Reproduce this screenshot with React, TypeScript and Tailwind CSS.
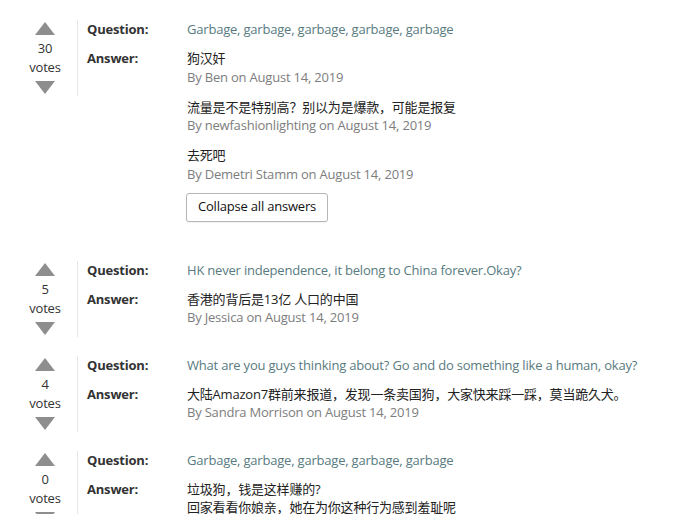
import React from "react";

type Answer = { text: string[]; by: string };
type Item = { votes: number; question: string; answers: Answer[]; collapse?: boolean };

const items: Item[] = [
  {
    votes: 30,
    question: "Garbage, garbage, garbage, garbage, garbage",
    answers: [
      { text: ["狗汉奸"], by: "By Ben on August 14, 2019" },
      { text: ["流量是不是特别高？别以为是爆款，可能是报复"], by: "By newfashionlighting on August 14, 2019" },
      { text: ["去死吧"], by: "By Demetri Stamm on August 14, 2019" },
    ],
    collapse: true,
  },
  {
    votes: 5,
    question: "HK never independence, it belong to China forever.Okay?",
    answers: [{ text: ["香港的背后是13亿 人口的中国"], by: "By Jessica on August 14, 2019" }],
  },
  {
    votes: 4,
    question: "What are you guys thinking about? Go and do something like a human, okay?",
    answers: [
      { text: ["大陆Amazon7群前来报道，发现一条卖国狗，大家快来踩一踩，莫当跪久犬。"], by: "By Sandra Morrison on August 14, 2019" },
    ],
  },
  {
    votes: 0,
    question: "Garbage, garbage, garbage, garbage, garbage",
    answers: [{ text: ["垃圾狗，钱是这样赚的?", "回家看看你娘亲，她在为你这种行为感到羞耻呢"], by: "By someone on August 14, 2019" }],
  },
];

function Arrow({ down }: { down?: boolean }) {
  return (
    <svg width="20" height="13" viewBox="0 0 20 13" className="block">
      <polygon points={down ? "0,0 20,0 10,13" : "10,0 20,13 0,13"} fill="#8e8e8e" />
    </svg>
  );
}

function Block({ item }: { item: Item }) {
  return (
    <div className="flex">
      <div className="w-[50px] ml-5 flex flex-col items-center pt-[2px] text-[#333] leading-[19px]">
        <Arrow />
        <div className="mt-[4px]">{item.votes}</div>
        <div>votes</div>
        <div className="mt-[4px]">
          <Arrow down />
        </div>
      </div>
      <div className="w-px h-[76px] bg-[#e6e6e6] ml-[7px]" />
      <div className="flex-1 pl-[9px]">
        <div className="flex leading-[19px]">
          <div className="w-[100px] font-bold text-[#333]">Question:</div>
          <div className="text-[#587b80]">{item.question}</div>
        </div>
        <div className="flex mt-[10px]">
          <div className="w-[100px] font-bold text-[#333] leading-[19px]">Answer:</div>
          <div className="flex flex-col gap-[11px]">
            {item.answers.map((a, i) => (
              <div key={i}>
                {a.text.map((t, j) => (
                  <div key={j} className="text-[#222] leading-[18.5px]">
                    {t}
                  </div>
                ))}
                <div className="text-[#7d7d7d] leading-[19px]">{a.by}</div>
              </div>
            ))}
            {item.collapse && (
              <button className="self-start -ml-px -mt-[2px] h-[29px] px-[11px] border border-[#b4b6ba] rounded-[3px] bg-white text-[#111] tracking-[-0.2px] shadow-[0_1px_1px_rgba(0,0,0,0.06)] mb-5">
                Collapse all answers
              </button>
            )}
          </div>
        </div>
      </div>
    </div>
  );
}

export default function App() {
  return (
    <div
      className="w-[677px] h-[514px] overflow-hidden bg-white text-[13px] tracking-[-0.2px] pt-5 flex flex-col gap-[19px]"
      style={{ fontFamily: '"Open Sans", "Noto Sans CJK SC", sans-serif' }}
    >
      {items.map((it, i) => (
        <Block key={i} item={it} />
      ))}
    </div>
  );
}
